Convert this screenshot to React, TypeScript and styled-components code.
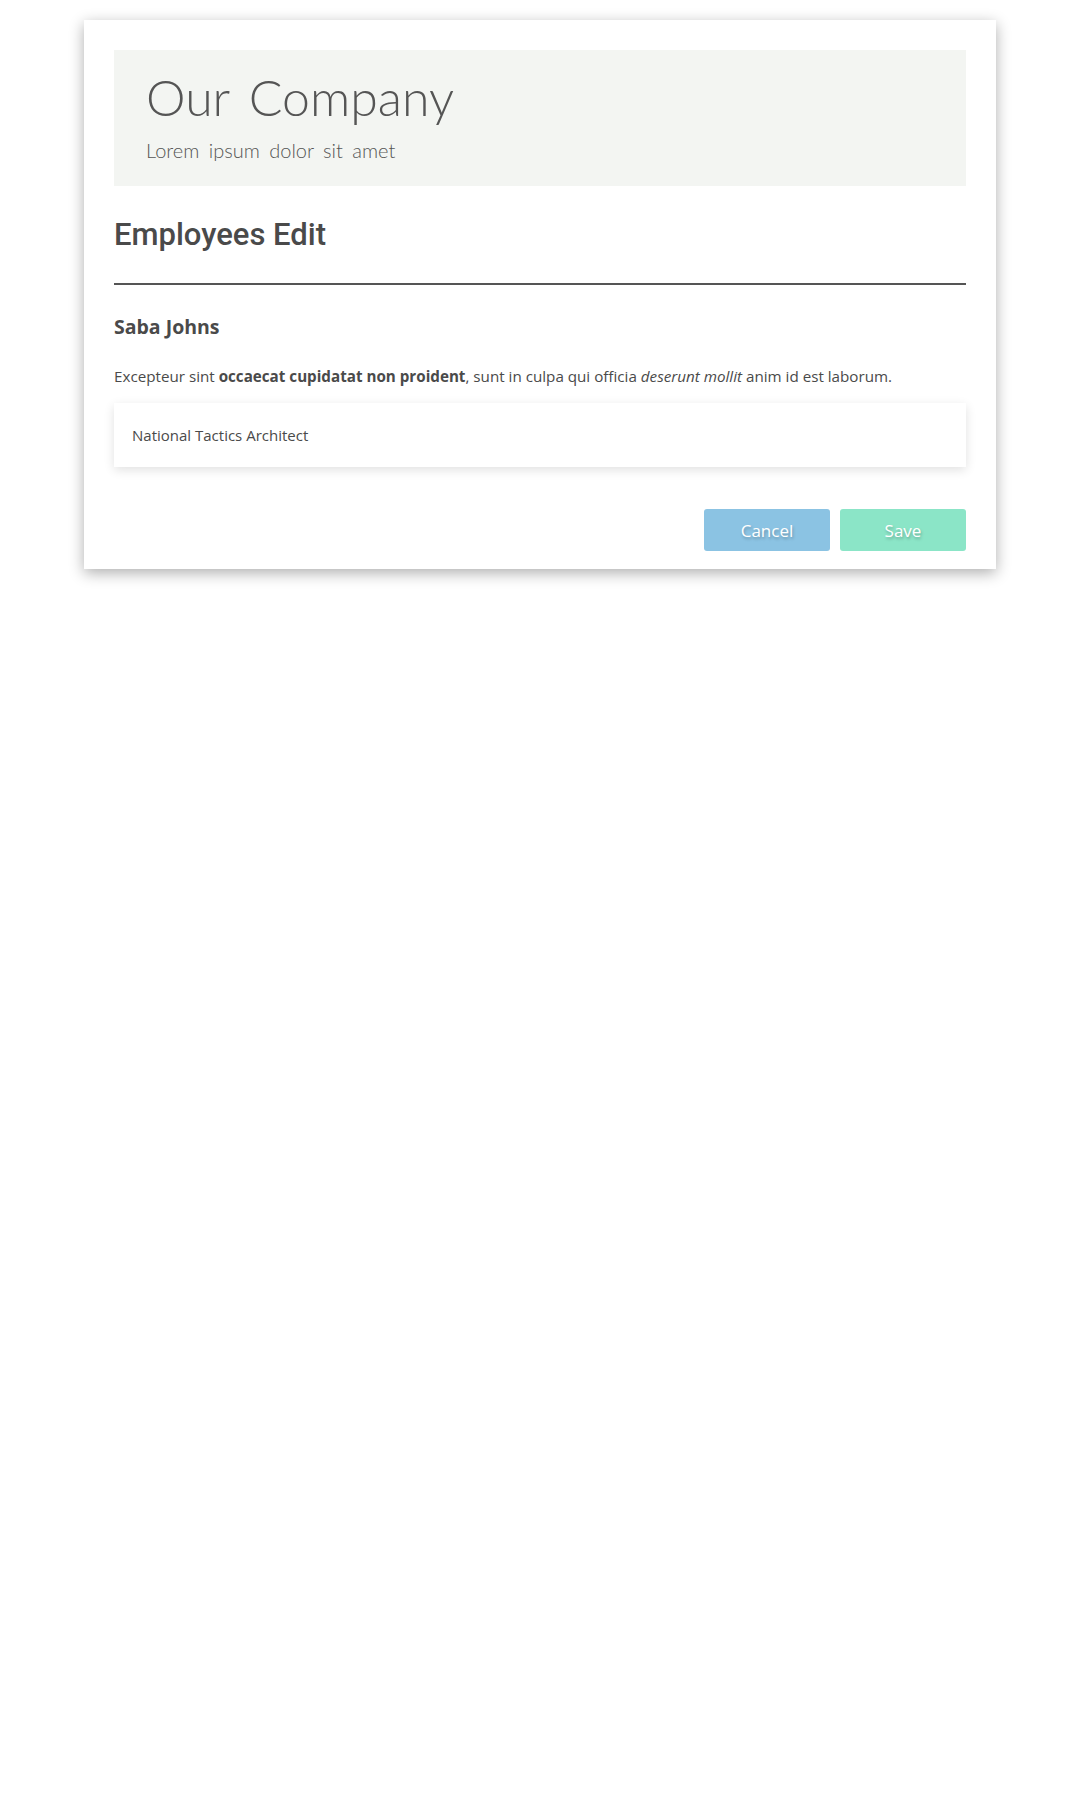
import styled, { createGlobalStyle } from "styled-components";

const GlobalStyle = createGlobalStyle`
  body {
    margin: 0;
    background: #ffffff;
    font-family: "Open Sans", "Noto Sans", sans-serif;
    color: #4a4a4a;
  }
`;

const Page = styled.div`
  padding: 20px 0 40px;
`;

const Card = styled.div`
  width: 912px;
  box-sizing: border-box;
  margin: 0 auto;
  padding: 30px 30px 18px;
  background: #ffffff;
  box-shadow: 0 4px 14px rgba(0, 0, 0, 0.32);
`;

const Banner = styled.div`
  background: #f3f5f2;
  height: 136px;
  box-sizing: border-box;
  padding: 17px 32px 0;
`;

const BrandTitle = styled.h1`
  margin: 0;
  font-family: "Lato", sans-serif;
  font-weight: 300;
  font-size: 50px;
  line-height: 60px;
  word-spacing: 6px;
  color: #555555;
`;

const BrandTagline = styled.p`
  margin: 11px 0 0;
  font-family: "Lato", sans-serif;
  font-weight: 300;
  font-size: 20px;
  line-height: 24px;
  word-spacing: 4px;
  color: #555555;
`;

const PageTitle = styled.h2`
  margin: 30px 0 0;
  font-family: "Roboto", sans-serif;
  font-weight: 500;
  font-size: 31px;
  line-height: 38px;
  color: #4a4a4a;
`;

const Divider = styled.hr`
  margin: 29px 0 0;
  border: none;
  height: 2px;
  background: #555555;
`;

const Name = styled.h3`
  margin: 29px 0 0;
  font-size: 19.5px;
  font-weight: 700;
  line-height: 26px;
  color: #4a4a4a;
`;

const Body = styled.p`
  margin: 25px 0 0;
  font-size: 15.2px;
  line-height: 22px;
  color: #4a4a4a;

  b {
    font-weight: 700;
  }
`;

const Field = styled.div`
  margin-top: 16px;
  height: 64px;
  display: flex;
  align-items: center;
  padding: 0 18px;
  background: #ffffff;
  box-shadow: 0 3px 10px rgba(0, 0, 0, 0.12);
  font-size: 15px;
  color: #4a4a4a;
`;

const Actions = styled.div`
  display: flex;
  justify-content: flex-end;
  gap: 10px;
  margin-top: 42px;
`;

const Button = styled.button<{ $tone: string }>`
  width: 126px;
  height: 42px;
  border: none;
  border-radius: 3px;
  background: ${(p) => p.$tone};
  color: #ffffff;
  font-family: "Open Sans", sans-serif;
  font-size: 17px;
  text-shadow: 1px 2px 3px rgba(0, 0, 0, 0.25);
  cursor: pointer;
`;

export default function App() {
  return (
    <Page>
      <GlobalStyle />
      <Card>
        <Banner>
          <BrandTitle>Our Company</BrandTitle>
          <BrandTagline>Lorem ipsum dolor sit amet</BrandTagline>
        </Banner>
        <PageTitle>Employees Edit</PageTitle>
        <Divider />
        <Name>Saba Johns</Name>
        <Body>
          Excepteur sint <b>occaecat cupidatat non proident</b>, sunt in culpa
          qui officia <i>deserunt mollit</i> anim id est laborum.
        </Body>
        <Field>National Tactics Architect</Field>
        <Actions>
          <Button $tone="#8bc3e3">Cancel</Button>
          <Button $tone="#8be5c7">Save</Button>
        </Actions>
      </Card>
    </Page>
  );
}
